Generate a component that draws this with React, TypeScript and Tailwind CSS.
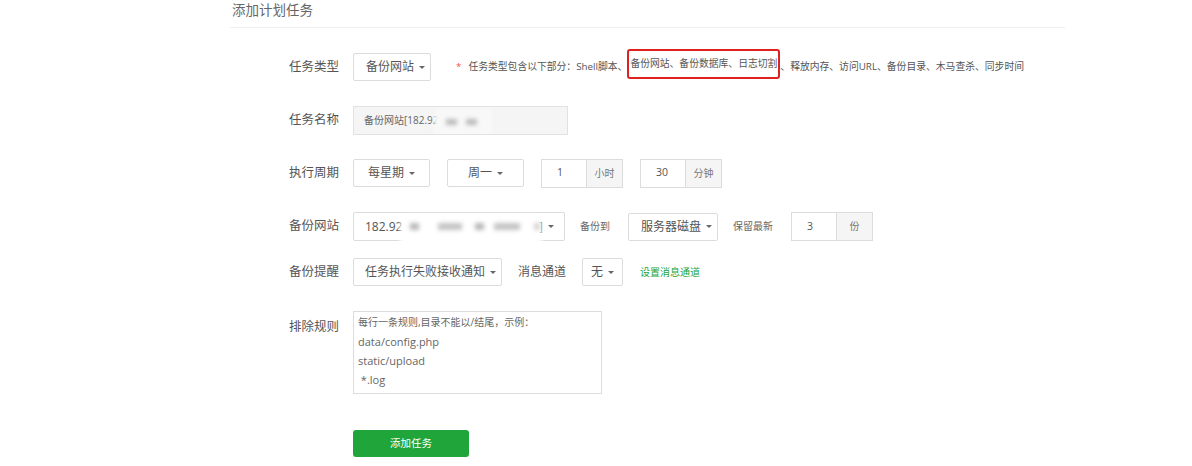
import React from 'react';

const Caret = () => (
  <span className="ml-[5px] inline-block h-0 w-0 border-x-[3.5px] border-t-[3.5px] border-x-transparent border-t-[#666]" />
);

const Label = ({ children }: { children: React.ReactNode }) => (
  <div className="w-[64px] shrink-0 text-[12.5px] text-[#555]">{children}</div>
);

const DropBtn = ({ text, className = '' }: { text: string; className?: string }) => (
  <div
    className={`flex h-[28px] items-center rounded-[2px] border border-[#dcdcdc] bg-white text-[12px] text-[#555] ${className}`}
  >
    {text}
    <Caret />
  </div>
);

const Group = ({ value, unit, className = '' }: { value: string; unit: string; className?: string }) => (
  <div className={`flex h-[29px] border border-[#dcdcdc] text-[#555] ${className}`}>
    <div className="flex w-[44px] items-center bg-white pl-[15px] text-[10.5px]">{value}</div>
    <div className="flex w-[36px] items-center justify-center border-l border-[#dcdcdc] bg-[#f5f5f5] text-[10px] text-[#777]">
      {unit}
    </div>
  </div>
);

export default function App() {
  return (
    <div className="h-[466px] w-[1192px] bg-white font-['Open_Sans','Noto_Sans_CJK_SC',sans-serif]">
      <div className="ml-[230px] w-[835px]">
        {/* header */}
        <div className="h-[28px] border-b border-[#eee] pl-[2px] pt-[1px] text-[13.5px] leading-[18px] text-[#666]">
          添加计划任务
        </div>

        <div className="flex flex-col pl-[59px] pt-[25px]">
          {/* 任务类型 */}
          <div className="flex h-[28px] items-center">
            <Label>任务类型</Label>
            <DropBtn text="备份网站" className="w-[78px] pl-[12px]" />
            <div className="ml-[25px] flex items-center whitespace-nowrap text-[9.8px] text-[#555]">
              <span className="mr-[7px] text-[#e55]">*</span>
              任务类型包含以下部分：Shell脚本、
              <span className="-translate-y-[3px] rounded-[3px] border-2 border-[#e02020] px-[1px] py-[7px] leading-[12px]">
                备份网站、备份数据库、日志切割
              </span>
              、释放内存、访问URL、备份目录、木马查杀、同步时间
            </div>
          </div>

          {/* 任务名称 */}
          <div className="mt-[25px] flex h-[29px] items-center">
            <Label>任务名称</Label>
            <div className="relative flex h-[29px] w-[215px] items-center overflow-hidden border border-[#e2e2e2] bg-[#f5f5f5] pl-[10px] text-[10px] text-[#666]">
              备份网站[182.92
              <div className="absolute left-[80px] top-[1px] h-[28px] w-[58px] rounded-[6px] bg-[#f8f8f8] blur-[2px]">
                <div className="absolute left-[12px] top-[11px] h-[6px] w-[11px] bg-[#bbb]" />
                <div className="absolute left-[32px] top-[11px] h-[6px] w-[11px] bg-[#bbb]" />
              </div>
            </div>
          </div>

          {/* 执行周期 */}
          <div className="mt-[24px] flex h-[28px] items-center">
            <Label>执行周期</Label>
            <DropBtn text="每星期" className="w-[77px] justify-center" />
            <DropBtn text="周一" className="ml-[17px] w-[77px] justify-center" />
            <Group value="1" unit="小时" className="ml-[17px]" />
            <Group value="30" unit="分钟" className="ml-[17px]" />
          </div>

          {/* 备份网站 */}
          <div className="mt-[25px] flex h-[29px] items-center">
            <Label>备份网站</Label>
            <div className="relative flex h-[29px] w-[212px] items-center rounded-[2px] border border-[#dcdcdc] bg-white pl-[11px] text-[12px] text-[#555]">
              182.92
              <span className="ml-auto">]</span>
              <span className="mr-[10px] flex">
                <Caret />
              </span>
              <div className="absolute left-[46px] top-[3px] h-[36px] w-[142px] rounded-[8px] bg-white/95 blur-[2px]">
                <div className="absolute left-[10px] top-[7px] h-[7px] w-[9px] bg-[#b8b8b8]" />
                <div className="absolute left-[38px] top-[7px] h-[7px] w-[24px] bg-[#c4c4c4]" />
                <div className="absolute left-[75px] top-[7px] h-[7px] w-[9px] bg-[#b8b8b8]" />
                <div className="absolute left-[94px] top-[7px] h-[7px] w-[26px] bg-[#c4c4c4]" />
                <div className="absolute left-[134px] top-[7px] h-[7px] w-[6px] bg-[#d4d4d4]" />
              </div>
            </div>
            <span className="ml-[15px] text-[10px] text-[#666]">备份到</span>
            <DropBtn text="服务器磁盘" className="ml-[18px] w-[90px] pl-[12px]" />
            <span className="ml-[15px] text-[10px] text-[#666]">保留最新</span>
            <Group value="3" unit="份" className="ml-[18px]" />
          </div>

          {/* 备份提醒 */}
          <div className="mt-[17px] flex h-[28px] items-center">
            <Label>备份提醒</Label>
            <DropBtn text="任务执行失败接收通知" className="w-[149px] pl-[11px]" />
            <span className="ml-[16px] text-[12px] text-[#555]">消息通道</span>
            <DropBtn text="无" className="ml-[16px] w-[41px] pl-[8px]" />
            <span className="ml-[17px] text-[10px] text-[#20a53a]">设置消息通道</span>
          </div>

          {/* 排除规则 */}
          <div className="mt-[25px] flex items-start">
            <div className="pt-[7px]">
              <Label>排除规则</Label>
            </div>
            <div className="h-[83px] w-[249px] border border-[#dcdcdc] bg-white pl-[4px] pt-[1px] text-[11px] leading-[19px] text-[#666]">
              <div className="text-[10px]">每行一条规则,目录不能以/结尾，示例：</div>
              <div>data/config.php</div>
              <div>static/upload</div>
              <div>&nbsp;*.log</div>
            </div>
          </div>

          {/* submit */}
          <div className="mt-[36px] pl-[64px]">
            <button className="flex h-[27px] w-[116px] items-center justify-center rounded-[3px] bg-[#20a53a] text-[10.5px] text-white">
              添加任务
            </button>
          </div>
        </div>
      </div>
    </div>
  );
}
